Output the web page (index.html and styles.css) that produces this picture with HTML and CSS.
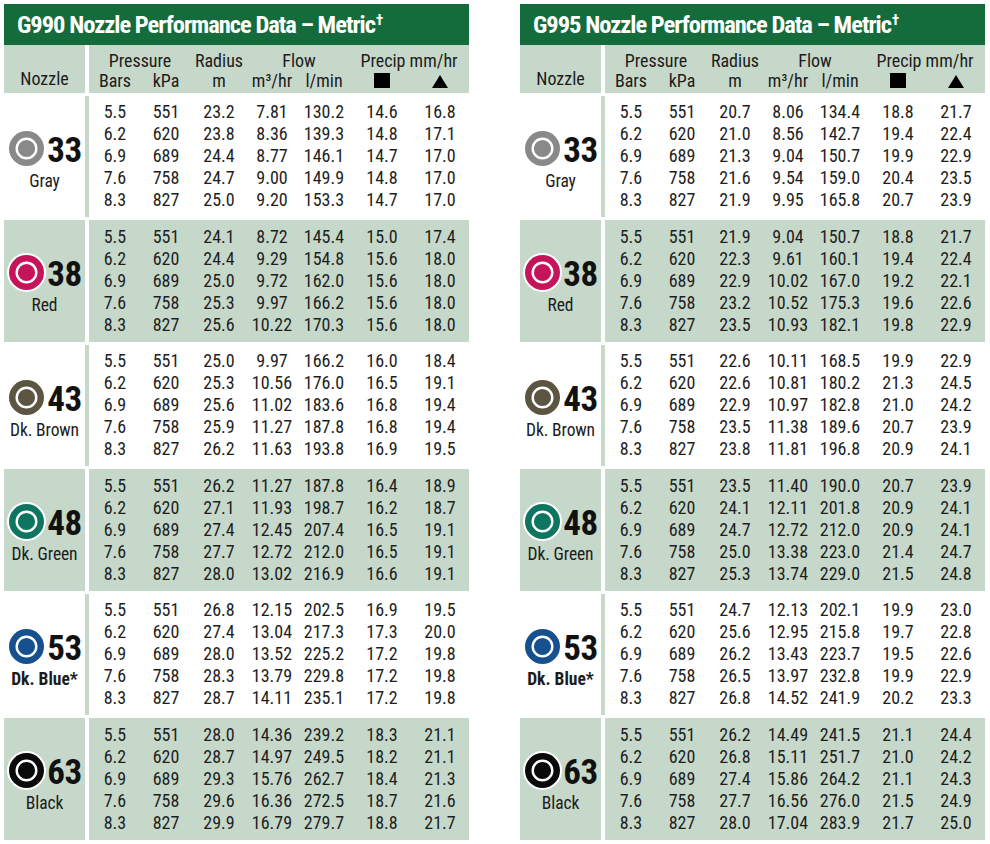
FILE: index.html
```html
<!DOCTYPE html>
<html lang="en">
<head>
<meta charset="utf-8">
<title>Nozzle Performance Data – Metric</title>
<link rel="stylesheet" href="styles.css">
</head>
<body>
<div class="page">

<section class="tbl">
  <h2 class="title">G990 Nozzle Performance Data – Metric<sup>†</sup></h2>
  <div class="head">
    <div class="hnoz">Nozzle</div>
    <div class="hdata">
      <div class="s2">Pressure</div><div>Radius</div><div class="s2">Flow</div><div class="s2">Precip mm/hr</div>
      <div>Bars</div><div>kPa</div><div>m</div><div>m³/hr</div><div>l/min</div><div><span class="sq"></span></div><div><span class="tri"></span></div>
    </div>
  </div>

  <div class="row w">
    <div class="noz"><div class="badge"><svg class="ic" viewBox="0 0 39 39"><circle cx="19.5" cy="19.5" r="19.5" fill="#fff"/><circle cx="19.5" cy="19.5" r="17.5" fill="#898989"/><circle cx="19.5" cy="19.5" r="9.8" fill="none" stroke="#fff" stroke-width="2.4"/></svg><span class="num">33</span></div><div class="lbl">Gray</div></div>
    <div class="data"><div>5.5<br>6.2<br>6.9<br>7.6<br>8.3</div><div>551<br>620<br>689<br>758<br>827</div><div>23.2<br>23.8<br>24.4<br>24.7<br>25.0</div><div>7.81<br>8.36<br>8.77<br>9.00<br>9.20</div><div>130.2<br>139.3<br>146.1<br>149.9<br>153.3</div><div>14.6<br>14.8<br>14.7<br>14.8<br>14.7</div><div>16.8<br>17.1<br>17.0<br>17.0<br>17.0</div></div>
  </div>
  <div class="row g">
    <div class="noz"><div class="badge"><svg class="ic" viewBox="0 0 39 39"><circle cx="19.5" cy="19.5" r="19.5" fill="#fff"/><circle cx="19.5" cy="19.5" r="17.5" fill="#c5145a"/><circle cx="19.5" cy="19.5" r="9.8" fill="none" stroke="#fff" stroke-width="2.4"/></svg><span class="num">38</span></div><div class="lbl">Red</div></div>
    <div class="data"><div>5.5<br>6.2<br>6.9<br>7.6<br>8.3</div><div>551<br>620<br>689<br>758<br>827</div><div>24.1<br>24.4<br>25.0<br>25.3<br>25.6</div><div>8.72<br>9.29<br>9.72<br>9.97<br>10.22</div><div>145.4<br>154.8<br>162.0<br>166.2<br>170.3</div><div>15.0<br>15.6<br>15.6<br>15.6<br>15.6</div><div>17.4<br>18.0<br>18.0<br>18.0<br>18.0</div></div>
  </div>
  <div class="row w">
    <div class="noz"><div class="badge"><svg class="ic" viewBox="0 0 39 39"><circle cx="19.5" cy="19.5" r="19.5" fill="#fff"/><circle cx="19.5" cy="19.5" r="17.5" fill="#5c5541"/><circle cx="19.5" cy="19.5" r="9.8" fill="none" stroke="#fff" stroke-width="2.4"/></svg><span class="num">43</span></div><div class="lbl">Dk. Brown</div></div>
    <div class="data"><div>5.5<br>6.2<br>6.9<br>7.6<br>8.3</div><div>551<br>620<br>689<br>758<br>827</div><div>25.0<br>25.3<br>25.6<br>25.9<br>26.2</div><div>9.97<br>10.56<br>11.02<br>11.27<br>11.63</div><div>166.2<br>176.0<br>183.6<br>187.8<br>193.8</div><div>16.0<br>16.5<br>16.8<br>16.8<br>16.9</div><div>18.4<br>19.1<br>19.4<br>19.4<br>19.5</div></div>
  </div>
  <div class="row g">
    <div class="noz"><div class="badge"><svg class="ic" viewBox="0 0 39 39"><circle cx="19.5" cy="19.5" r="19.5" fill="#fff"/><circle cx="19.5" cy="19.5" r="17.5" fill="#0e7561"/><circle cx="19.5" cy="19.5" r="9.8" fill="none" stroke="#fff" stroke-width="2.4"/></svg><span class="num">48</span></div><div class="lbl">Dk. Green</div></div>
    <div class="data"><div>5.5<br>6.2<br>6.9<br>7.6<br>8.3</div><div>551<br>620<br>689<br>758<br>827</div><div>26.2<br>27.1<br>27.4<br>27.7<br>28.0</div><div>11.27<br>11.93<br>12.45<br>12.72<br>13.02</div><div>187.8<br>198.7<br>207.4<br>212.0<br>216.9</div><div>16.4<br>16.2<br>16.5<br>16.5<br>16.6</div><div>18.9<br>18.7<br>19.1<br>19.1<br>19.1</div></div>
  </div>
  <div class="row w">
    <div class="noz"><div class="badge"><svg class="ic" viewBox="0 0 39 39"><circle cx="19.5" cy="19.5" r="19.5" fill="#fff"/><circle cx="19.5" cy="19.5" r="17.5" fill="#17508f"/><circle cx="19.5" cy="19.5" r="9.8" fill="none" stroke="#fff" stroke-width="2.4"/></svg><span class="num">53</span></div><div class="lbl b">Dk. Blue*</div></div>
    <div class="data"><div>5.5<br>6.2<br>6.9<br>7.6<br>8.3</div><div>551<br>620<br>689<br>758<br>827</div><div>26.8<br>27.4<br>28.0<br>28.3<br>28.7</div><div>12.15<br>13.04<br>13.52<br>13.79<br>14.11</div><div>202.5<br>217.3<br>225.2<br>229.8<br>235.1</div><div>16.9<br>17.3<br>17.2<br>17.2<br>17.2</div><div>19.5<br>20.0<br>19.8<br>19.8<br>19.8</div></div>
  </div>
  <div class="row g">
    <div class="noz"><div class="badge"><svg class="ic" viewBox="0 0 39 39"><circle cx="19.5" cy="19.5" r="19.5" fill="#fff"/><circle cx="19.5" cy="19.5" r="17.5" fill="#0a0a0a"/><circle cx="19.5" cy="19.5" r="9.8" fill="none" stroke="#fff" stroke-width="2.4"/></svg><span class="num">63</span></div><div class="lbl">Black</div></div>
    <div class="data"><div>5.5<br>6.2<br>6.9<br>7.6<br>8.3</div><div>551<br>620<br>689<br>758<br>827</div><div>28.0<br>28.7<br>29.3<br>29.6<br>29.9</div><div>14.36<br>14.97<br>15.76<br>16.36<br>16.79</div><div>239.2<br>249.5<br>262.7<br>272.5<br>279.7</div><div>18.3<br>18.2<br>18.4<br>18.7<br>18.8</div><div>21.1<br>21.1<br>21.3<br>21.6<br>21.7</div></div>
  </div>
</section>

<section class="tbl">
  <h2 class="title">G995 Nozzle Performance Data – Metric<sup>†</sup></h2>
  <div class="head">
    <div class="hnoz">Nozzle</div>
    <div class="hdata">
      <div class="s2">Pressure</div><div>Radius</div><div class="s2">Flow</div><div class="s2">Precip mm/hr</div>
      <div>Bars</div><div>kPa</div><div>m</div><div>m³/hr</div><div>l/min</div><div><span class="sq"></span></div><div><span class="tri"></span></div>
    </div>
  </div>

  <div class="row w">
    <div class="noz"><div class="badge"><svg class="ic" viewBox="0 0 39 39"><circle cx="19.5" cy="19.5" r="19.5" fill="#fff"/><circle cx="19.5" cy="19.5" r="17.5" fill="#898989"/><circle cx="19.5" cy="19.5" r="9.8" fill="none" stroke="#fff" stroke-width="2.4"/></svg><span class="num">33</span></div><div class="lbl">Gray</div></div>
    <div class="data"><div>5.5<br>6.2<br>6.9<br>7.6<br>8.3</div><div>551<br>620<br>689<br>758<br>827</div><div>20.7<br>21.0<br>21.3<br>21.6<br>21.9</div><div>8.06<br>8.56<br>9.04<br>9.54<br>9.95</div><div>134.4<br>142.7<br>150.7<br>159.0<br>165.8</div><div>18.8<br>19.4<br>19.9<br>20.4<br>20.7</div><div>21.7<br>22.4<br>22.9<br>23.5<br>23.9</div></div>
  </div>
  <div class="row g">
    <div class="noz"><div class="badge"><svg class="ic" viewBox="0 0 39 39"><circle cx="19.5" cy="19.5" r="19.5" fill="#fff"/><circle cx="19.5" cy="19.5" r="17.5" fill="#c5145a"/><circle cx="19.5" cy="19.5" r="9.8" fill="none" stroke="#fff" stroke-width="2.4"/></svg><span class="num">38</span></div><div class="lbl">Red</div></div>
    <div class="data"><div>5.5<br>6.2<br>6.9<br>7.6<br>8.3</div><div>551<br>620<br>689<br>758<br>827</div><div>21.9<br>22.3<br>22.9<br>23.2<br>23.5</div><div>9.04<br>9.61<br>10.02<br>10.52<br>10.93</div><div>150.7<br>160.1<br>167.0<br>175.3<br>182.1</div><div>18.8<br>19.4<br>19.2<br>19.6<br>19.8</div><div>21.7<br>22.4<br>22.1<br>22.6<br>22.9</div></div>
  </div>
  <div class="row w">
    <div class="noz"><div class="badge"><svg class="ic" viewBox="0 0 39 39"><circle cx="19.5" cy="19.5" r="19.5" fill="#fff"/><circle cx="19.5" cy="19.5" r="17.5" fill="#5c5541"/><circle cx="19.5" cy="19.5" r="9.8" fill="none" stroke="#fff" stroke-width="2.4"/></svg><span class="num">43</span></div><div class="lbl">Dk. Brown</div></div>
    <div class="data"><div>5.5<br>6.2<br>6.9<br>7.6<br>8.3</div><div>551<br>620<br>689<br>758<br>827</div><div>22.6<br>22.6<br>22.9<br>23.5<br>23.8</div><div>10.11<br>10.81<br>10.97<br>11.38<br>11.81</div><div>168.5<br>180.2<br>182.8<br>189.6<br>196.8</div><div>19.9<br>21.3<br>21.0<br>20.7<br>20.9</div><div>22.9<br>24.5<br>24.2<br>23.9<br>24.1</div></div>
  </div>
  <div class="row g">
    <div class="noz"><div class="badge"><svg class="ic" viewBox="0 0 39 39"><circle cx="19.5" cy="19.5" r="19.5" fill="#fff"/><circle cx="19.5" cy="19.5" r="17.5" fill="#0e7561"/><circle cx="19.5" cy="19.5" r="9.8" fill="none" stroke="#fff" stroke-width="2.4"/></svg><span class="num">48</span></div><div class="lbl">Dk. Green</div></div>
    <div class="data"><div>5.5<br>6.2<br>6.9<br>7.6<br>8.3</div><div>551<br>620<br>689<br>758<br>827</div><div>23.5<br>24.1<br>24.7<br>25.0<br>25.3</div><div>11.40<br>12.11<br>12.72<br>13.38<br>13.74</div><div>190.0<br>201.8<br>212.0<br>223.0<br>229.0</div><div>20.7<br>20.9<br>20.9<br>21.4<br>21.5</div><div>23.9<br>24.1<br>24.1<br>24.7<br>24.8</div></div>
  </div>
  <div class="row w">
    <div class="noz"><div class="badge"><svg class="ic" viewBox="0 0 39 39"><circle cx="19.5" cy="19.5" r="19.5" fill="#fff"/><circle cx="19.5" cy="19.5" r="17.5" fill="#17508f"/><circle cx="19.5" cy="19.5" r="9.8" fill="none" stroke="#fff" stroke-width="2.4"/></svg><span class="num">53</span></div><div class="lbl b">Dk. Blue*</div></div>
    <div class="data"><div>5.5<br>6.2<br>6.9<br>7.6<br>8.3</div><div>551<br>620<br>689<br>758<br>827</div><div>24.7<br>25.6<br>26.2<br>26.5<br>26.8</div><div>12.13<br>12.95<br>13.43<br>13.97<br>14.52</div><div>202.1<br>215.8<br>223.7<br>232.8<br>241.9</div><div>19.9<br>19.7<br>19.5<br>19.9<br>20.2</div><div>23.0<br>22.8<br>22.6<br>22.9<br>23.3</div></div>
  </div>
  <div class="row g">
    <div class="noz"><div class="badge"><svg class="ic" viewBox="0 0 39 39"><circle cx="19.5" cy="19.5" r="19.5" fill="#fff"/><circle cx="19.5" cy="19.5" r="17.5" fill="#0a0a0a"/><circle cx="19.5" cy="19.5" r="9.8" fill="none" stroke="#fff" stroke-width="2.4"/></svg><span class="num">63</span></div><div class="lbl">Black</div></div>
    <div class="data"><div>5.5<br>6.2<br>6.9<br>7.6<br>8.3</div><div>551<br>620<br>689<br>758<br>827</div><div>26.2<br>26.8<br>27.4<br>27.7<br>28.0</div><div>14.49<br>15.11<br>15.86<br>16.56<br>17.04</div><div>241.5<br>251.7<br>264.2<br>276.0<br>283.9</div><div>21.1<br>21.0<br>21.1<br>21.5<br>21.7</div><div>24.4<br>24.2<br>24.3<br>24.9<br>25.0</div></div>
  </div>
</section>

</div>
</body>
</html>
```

FILE: styles.css
```css
* { box-sizing: border-box; }

body {
  margin: 0;
  background: #ffffff;
  color: #1c1c1c;
  font-family: "Roboto Condensed", Roboto, "Liberation Sans", sans-serif;
  font-stretch: 75%;
}

.page {
  display: flex;
  gap: 51px;
  padding: 4px 0 0 4px;
}

.tbl {
  width: 465px;
  flex: none;
}

.title {
  margin: 0;
  height: 41px;
  padding-left: 13px;
  background: #146b3b;
  color: #ffffff;
  font-size: 24.5px;
  font-weight: bold;
  line-height: 42px;
  letter-spacing: -1px;
  white-space: nowrap;
}

.title sup {
  font-size: 15px;
  line-height: 0;
  vertical-align: 8px;
  letter-spacing: 0;
  margin-left: 1px;
}

.head {
  display: grid;
  grid-template-columns: 81px 1fr;
  column-gap: 4px;
  height: 47.5px;
}

.hnoz,
.hdata {
  background: #c6d8ca;
}

.hnoz {
  font-size: 18px;
  line-height: 18px;
  text-align: center;
  padding-top: 24.6px;
}

.hdata {
  display: grid;
  grid-template-columns: 52px 50px 56px 50px 54px 62px 54px;
  font-size: 18px;
  line-height: 18px;
  padding-top: 6.6px;
  text-align: center;
}

.hdata .s2 {
  grid-column: span 2;
}

.sq {
  display: inline-block;
  width: 16px;
  height: 15px;
  background: #000;
  vertical-align: -1px;
}

.tri {
  display: inline-block;
  width: 0;
  height: 0;
  border-left: 8.5px solid transparent;
  border-right: 8.5px solid transparent;
  border-bottom: 13px solid #000;
  vertical-align: -1px;
}

.row {
  display: grid;
  grid-template-columns: 81px 1fr;
  column-gap: 4px;
  height: 121.5px;
  margin-top: 3px;
}

.row.w {
  background: #c6d8ca;
}

.row.w > div {
  background: #ffffff;
}

.row.g {
  background: #ffffff;
}

.row.g > div {
  background: #c6d8ca;
}

.noz {
  display: flex;
  flex-direction: column;
  align-items: center;
  padding-top: 33px;
}

.badge {
  display: flex;
  align-items: center;
  height: 39px;
}

.ic {
  width: 39px;
  height: 39px;
  display: block;
}

.num {
  font-size: 35px;
  font-weight: bold;
  line-height: 35px;
  margin-left: 1px;
  margin-top: 4px;
  letter-spacing: -0.5px;
  color: #111;
}

.lbl {
  font-size: 17.5px;
  line-height: 20px;
  margin-top: 3px;
  letter-spacing: -0.1px;
  white-space: nowrap;
}

.lbl.b {
  font-weight: bold;
  letter-spacing: 0;
}

.data {
  display: grid;
  grid-template-columns: 52px 50px 56px 50px 54px 62px 54px;
  font-size: 18px;
  line-height: 22px;
  padding-top: 5.5px;
  text-align: center;
  color: #1e1e1e;
}
```
